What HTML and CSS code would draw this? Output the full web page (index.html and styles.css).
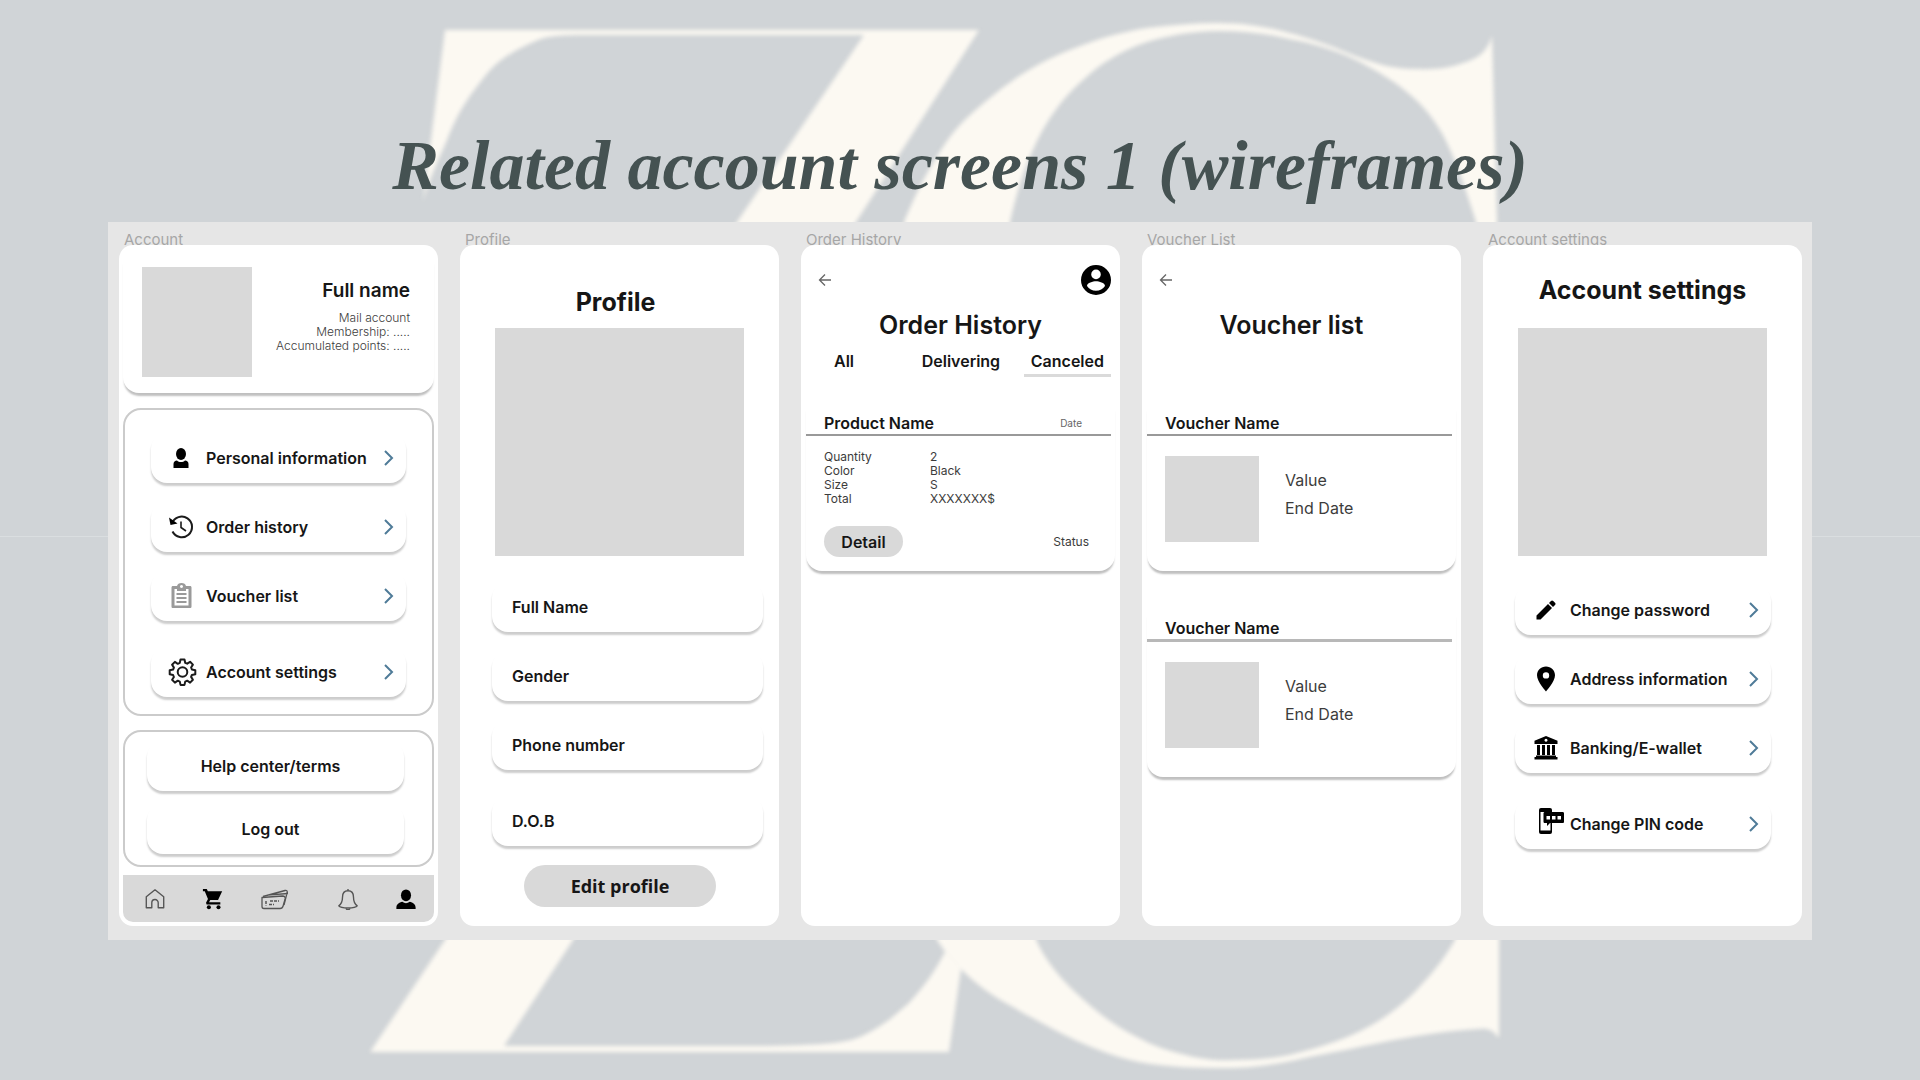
FILE: index.html
```html
<!DOCTYPE html>
<html lang="en">
<head>
<meta charset="utf-8">
<meta name="viewport" content="width=device-width, initial-scale=1">
<title>Related account screens 1 (wireframes)</title>
<link rel="stylesheet" href="styles.css">
</head>
<body>
<svg class="monogram" viewBox="0 0 1920 1080" preserveAspectRatio="xMidYMid slice" aria-hidden="true">
  <path d="M445 30H979L856 222L573 940L504 1046H767C830 1045 850 1042 862 1036C885 1025 895 1015 909 1003C930 980 938 965 945 952L937 940L961 969L949 1052H370L445 940L737 222L864 35H590C560 35 548 36 538 40C510 52 495 62 482 80C462 105 455 120 447 140C436 165 427 185 423 202Z"/>
  <path fill-rule="evenodd" d="M904 222C915 195 925 175 941 150C957 124 975 110 996 93C1022 72 1048 58 1075 48C1100 38 1122 32 1147 28C1170 25 1195 23 1218 23C1245 23 1268 27 1289 33C1306 37 1320 42 1336 48C1350 54 1362 59 1376 63C1388 67 1402 69 1419 69C1437 70 1452 67 1463 63C1476 59 1483 54 1487 47C1490 43 1491 39 1492 35L1497 222L1499 940V1038C1493 1030 1488 1028 1479 1029C1440 1031 1410 1037 1384 1042C1355 1048 1330 1053 1305 1058C1280 1064 1250 1068 1226 1068C1195 1068 1165 1067 1139 1062C1115 1057 1095 1049 1075 1040C1048 1027 1025 1014 1004 1002C985 991 972 980 961 969L937 940L904 700ZM1010 222L1036 940C1046 961 1059 977 1075 992C1094 1010 1114 1026 1139 1038C1153 1046 1169 1051 1186 1055C1200 1059 1217 1061 1234 1060C1258 1060 1278 1058 1297 1053C1325 1046 1348 1038 1368 1027C1392 1014 1409 999 1423 983C1437 968 1447 954 1455 940L1476 222C1466 190 1458 166 1447 143C1437 122 1424 106 1408 93C1394 81 1377 71 1360 62C1338 51 1314 43 1289 39C1266 33 1242 31 1218 31C1191 31 1167 36 1147 42C1120 51 1100 64 1083 80C1062 98 1047 120 1036 143C1024 168 1016 195 1010 222Z"/>
</svg>

<svg class="sprite" aria-hidden="true">
  <symbol id="i-chevron" viewBox="0 0 10 16"><path d="M1 1l7 7-7 7" fill="none" stroke="#4f7b98" stroke-width="2"/></symbol>
  <symbol id="i-back" viewBox="0 0 14 14"><path d="M13 7H1.500M7 1.500L1.500 7L7 12.500" fill="none" stroke="#666" stroke-width="1.300"/></symbol>
</svg>

<main class="slide">
  <h1 class="slide-title">Related account screens 1 (wireframes)</h1>
  <div class="board">

    <section class="screen">
      <h2 class="screen-label">Account</h2>
      <div class="frame">
        <div class="card user-card">
          <div class="avatar"></div>
          <div class="user-text">
            <h3 class="user-name">Full name</h3>
            <p class="small light">Mail account<br>Membership: .....<br>Accumulated points: .....</p>
          </div>
        </div>
        <div class="group">
          <div class="list">
            <button class="row" type="button">
              <svg class="icon" viewBox="0 0 28 28"><ellipse cx="13" cy="10" rx="5" ry="6"/><path d="M5.500 24v-4c0-2 1.500-3.500 3.500-3.500 2 2 6 2 8 0 2 0 3.500 1.500 3.500 3.500v4z"/></svg>
              <span>Personal information</span><svg class="chevron"><use href="#i-chevron"/></svg>
            </button>
            <button class="row" type="button">
              <svg class="icon" viewBox="0 0 28 28"><g fill="none" stroke="#1b1b1b" stroke-width="2"><path d="M4 10.500A10.300 10.300 0 1 1 4.500 18.500"/><path d="M13 8.500v6l5 3.500" stroke-width="1.600"/></g><path d="M1 4.500l1.500 7.500 7-1.500z"/></svg>
              <span>Order history</span><svg class="chevron"><use href="#i-chevron"/></svg>
            </button>
            <button class="row" type="button">
              <svg class="icon" viewBox="0 0 28 28"><path fill="#9a9a9a" fill-rule="evenodd" d="M5 4h4c.5-2 2-3 4.500-3S17.500 2 18 4h4c1 0 1.500.6 1.500 1.500v19c0 1-.6 1.500-1.500 1.500H5c-1 0-1.500-.5-1.500-1.500v-19C3.500 4.600 4 4 5 4zM6.500 7v16.500h14V7H18v2H9V7zM13.500 3a1.500 1.500 0 1 0 .01 0z"/><path d="M8.500 12h10M8.500 16h10M8.500 20h10" stroke="#9a9a9a" stroke-width="1.800"/></svg>
              <span>Voucher list</span><svg class="chevron"><use href="#i-chevron"/></svg>
            </button>
            <button class="row" type="button">
              <svg class="icon" viewBox="0 0 28 28"><g fill="none" stroke="#1b1b1b" stroke-width="2" stroke-linejoin="round"><circle cx="14.500" cy="14" r="4.800"/><path d="M12.500 1.500h4l.7 3.300 2 .9 2.900-1.900 2.800 2.800-1.800 2.900.8 2 3.400.7v4l-3.400.7-.8 2 1.800 2.900-2.800 2.800-2.900-1.900-2 .9-.7 3.300h-4l-.7-3.300-2-.9-2.900 1.900-2.800-2.800L5.900 19l-.8-2-3.400-.7v-4l3.400-.7.8-2-1.800-2.900 2.800-2.800 2.900 1.900 2-.9z"/></g></svg>
              <span>Account settings</span><svg class="chevron"><use href="#i-chevron"/></svg>
            </button>
          </div>
        </div>
        <div class="group group-links">
          <button class="row row-center" type="button">Help center/terms</button>
          <button class="row row-center" type="button">Log out</button>
        </div>
        <nav class="tabbar" aria-label="Main">
          <a href="#home" aria-label="Home"><svg viewBox="0 0 24 24"><path d="M2.500 9.500L12 2l9.500 7.500V21.500H15.500V16a3.500 3.500 0 0 0-7 0v5.500h-6z" fill="none" stroke="#555" stroke-width="1.500" stroke-linejoin="round"/></svg></a>
          <a href="#cart" aria-label="Cart"><svg viewBox="0 0 24 24"><path d="M1 1h4.200l1.200 2.500H22l-4.500 9.500H9l-1.300 2.500H20V18H5l-.6-1.800L6.500 12 3 3.500H1z"/><circle cx="7.500" cy="21" r="2.200"/><circle cx="18" cy="21" r="2.200"/></svg></a>
          <a href="#wallet" aria-label="Vouchers"><svg class="wide" viewBox="0 0 30 24"><g fill="none" stroke="#555" stroke-width="1.300" stroke-linejoin="round"><path d="M2 10.500L22.500 9c2 0 3 1 2.600 3l-2 7c-.4 1.500-1.200 2.500-3 2.500H4c-1.500 0-2-.8-2-2z"/><path d="M3 9.500L25 3.500c1.600-.4 2.500.2 2.200 1.800L24 18M7 8.200L28 6.500"/><path d="M6 14v4.500M9 17.500h5M10 14h9" stroke-width="1.500" stroke-dasharray="3 1"/></g></svg></a>
          <a href="#alerts" aria-label="Notifications"><svg viewBox="0 0 24 24"><path d="M12 1v2M12 3c-4 0-6 3-6 7 0 4-1 7-4 9.500 2 3 18 3 20 0-3-2.500-4-5.500-4-9.500 0-4-2-7-6-7zM10 22.500c.5 1.500 3.500 1.500 4 0" fill="none" stroke="#555" stroke-width="1.500" stroke-linejoin="round"/></svg></a>
          <a href="#account" aria-label="Account"><svg viewBox="0 0 24 24"><ellipse cx="12" cy="8" rx="5.500" ry="6.500"/><path d="M1.500 23v-1.500c0-4 3-5.500 6.500-6.500 2.500 2 5.500 2 8 0 3.500 1 6.500 2.500 6.500 6.500V23z"/></svg></a>
        </nav>
      </div>
    </section>

    <section class="screen">
      <h2 class="screen-label">Profile</h2>
      <div class="frame">
        <h3 class="heading heading-photo heading-low">Profile</h3>
        <div class="photo"></div>
        <form class="profile-form">
          <div class="list">
            <input class="field" type="text" aria-label="Full Name" placeholder="Full Name">
            <input class="field" type="text" aria-label="Gender" placeholder="Gender">
            <input class="field" type="text" aria-label="Phone number" placeholder="Phone number">
            <input class="field" type="text" aria-label="D.O.B" placeholder="D.O.B">
          </div>
          <button class="pill pill-edit" type="button">Edit profile</button>
        </form>
      </div>
    </section>

    <section class="screen">
      <h2 class="screen-label">Order History</h2>
      <div class="frame">
        <div class="topbar">
          <a href="#back" aria-label="Back"><svg class="back"><use href="#i-back"/></svg></a>
          <a href="#me" aria-label="Account"><svg class="me" viewBox="0 0 30 30"><path fill-rule="evenodd" d="M15 0a15 15 0 1 0 0 30 15 15 0 0 0 0-30zm0 4.600a4.800 4.800 0 1 1 0 9.600 4.800 4.800 0 0 1 0-9.600zm0 21.100c-3.800 0-7-1.900-9-4.800.1-3 6-4.600 9-4.600s8.900 1.600 9 4.600c-2 2.900-5.200 4.800-9 4.800z"/></svg></a>
        </div>
        <h3 class="heading">Order History</h3>
        <div class="tabs">
          <button class="tab" type="button">All</button>
          <button class="tab" type="button">Delivering</button>
          <button class="tab tab-active" type="button">Canceled</button>
        </div>
        <article class="card item">
          <header class="item-head"><h4>Product Name</h4><span class="date">Date</span></header>
          <dl class="details small">
            <dt>Quantity</dt><dd>2</dd>
            <dt>Color</dt><dd>Black</dd>
            <dt>Size</dt><dd>S</dd>
            <dt>Total</dt><dd>XXXXXXX$</dd>
          </dl>
          <footer class="item-foot"><button class="pill pill-detail" type="button">Detail</button><span class="small">Status</span></footer>
        </article>
      </div>
    </section>

    <section class="screen">
      <h2 class="screen-label">Voucher List</h2>
      <div class="frame">
        <div class="topbar"><a href="#back" aria-label="Back"><svg class="back"><use href="#i-back"/></svg></a></div>
        <h3 class="heading heading-voucher">Voucher list</h3>
        <article class="card item">
          <header class="item-head"><h4>Voucher Name</h4></header>
          <div class="voucher"><div class="thumb"></div><p>Value<br>End Date</p></div>
        </article>
        <article class="card item">
          <header class="item-head item-head-thick"><h4>Voucher Name</h4></header>
          <div class="voucher"><div class="thumb"></div><p>Value<br>End Date</p></div>
        </article>
      </div>
    </section>

    <section class="screen">
      <h2 class="screen-label">Account settings</h2>
      <div class="frame">
        <h3 class="heading heading-photo">Account settings</h3>
        <div class="photo"></div>
        <div class="list list-settings">
          <button class="row" type="button">
            <svg class="icon" viewBox="0 0 28 28"><path d="M4.500 19.500L16 8l4 4L8.500 23.500h-4zM17 7l2-2c.7-.7 1.500-.7 2.200 0l1.800 1.800c.7.7.7 1.500 0 2.200l-2 2z"/></svg>
            <span>Change password</span><svg class="chevron"><use href="#i-chevron"/></svg>
          </button>
          <button class="row" type="button">
            <svg class="icon" viewBox="0 0 28 28"><path fill-rule="evenodd" d="M14 1.500c-5 0-9 3.800-9 8.800C5 17 14 26.500 14 26.500s9-9.500 9-16.200c0-5-4-8.800-9-8.800zm0 5.700a3.200 3.200 0 1 1 0 6.400 3.200 3.200 0 0 1 0-6.400z"/></svg>
            <span>Address information</span><svg class="chevron"><use href="#i-chevron"/></svg>
          </button>
          <button class="row" type="button">
            <svg class="icon" viewBox="0 0 28 28"><path fill-rule="evenodd" d="M14 2l11.500 4.800V10h-23V6.800zm0 2.800a1.500 1.500 0 1 0 .01 0zM5 11h3v10H5zm5 0h3v10h-3zm5 0h3v10h-3zm5 0h3v10h-3zM4 21.500h20V23h1.500v2.500h-23V23H4z"/></svg>
            <span>Banking/E-wallet</span><svg class="chevron"><use href="#i-chevron"/></svg>
          </button>
          <button class="row" type="button">
            <svg class="icon" viewBox="0 0 28 28"><rect x="7" y="-2" width="13" height="26" rx="2"/><path fill="#fff" d="M8.500 2h10v18.500h-10z"/><path d="M13 2h17.500c1 0 1.500.5 1.500 1.500v8c0 1-.5 1.500-1.500 1.500H18l-3 3v-3h-2c-1 0-1.500-.5-1.500-1.500v-8C11.500 2.500 12 2 13 2z"/><path fill="#fff" d="M14.500 6h3.500v3.500h-3.500zm5.500 0h3.500v3.500H20zm5.500 0H29v3.500h-3.500z"/></svg>
            <span>Change PIN code</span><svg class="chevron"><use href="#i-chevron"/></svg>
          </button>
        </div>
      </div>
    </section>

  </div>
</main>
</body>
</html>
```
FILE: styles.css
```css
* { box-sizing: border-box; }

body {
  margin: 0;
  min-height: 100vh;
  position: relative;
  overflow-x: hidden;
  background: linear-gradient(#dadee0, #dadee0) 0 536px / 100% 1px no-repeat #d0d4d7;
  color: #161616;
  font-family: Inter, "Liberation Sans", sans-serif;
  font-size: 16px;
}

h1, h2, h3, h4, p, dl, dd { margin: 0; }

button, input { font: inherit; color: inherit; border: 0; padding: 0; margin: 0; }

a { color: inherit; }

svg { display: block; flex: none; }

.sprite { position: absolute; width: 0; height: 0; }

.monogram {
  position: absolute;
  inset: 0;
  width: 100%;
  height: 100%;
  fill: #fcf9f2;
  filter: blur(2px);
}

.slide { position: relative; padding: 126px 108px 140px; }

.slide-title {
  margin-bottom: 16px;
  font: italic bold 70px/80px "Liberation Serif", "Times New Roman", serif;
  color: #455252;
  text-align: center;
}

.board {
  display: grid;
  grid-template-columns: repeat(5, minmax(0, 1fr));
  gap: 22px;
  padding: 7px 10px 14px 11px;
  background: #e6e6e6;
}

.screen { display: flex; flex-direction: column; }

.screen-label {
  height: 16px;
  padding-left: 5px;
  font-size: 15px;
  line-height: 22px;
  font-weight: 400;
  color: #a6a6a6;
}

.frame {
  flex: 1;
  display: flex;
  flex-direction: column;
  padding: 4px;
  border-radius: 14px;
  background: #fff;
}

/* Shared pieces */
.card { border-radius: 16px; box-shadow: 0 4px 2px -1px rgba(0, 0, 0, .25); }

.small { font-size: 12px; line-height: 14px; font-weight: 400; color: #3c3c3c; }
.light { font-weight: 300; }

.list { display: flex; flex-direction: column; gap: 19px; }
.list > :last-child { margin-top: 7px; }

.row, .field {
  height: 50px;
  border-radius: 16px;
  background: #fff;
  box-shadow: 0 3px 2px rgba(0, 0, 0, .2);
  font-weight: 600;
}

.row {
  display: flex;
  align-items: center;
  gap: 10px;
  padding: 0 12px 0 17px;
  text-align: left;
}
.row span { flex: 1; white-space: nowrap; }
.row-center { justify-content: center; padding: 0 10px 0 0; }

.icon { width: 28px; height: 28px; overflow: visible; }
.chevron { width: 10px; height: 16px; }

.heading {
  font-size: 25px;
  line-height: 32px;
  font-weight: 600;
  text-align: center;
}

.pill { border-radius: 24px; background: #d9d9d9; font-weight: 600; }

/* Account */
.user-card {
  display: flex;
  justify-content: space-between;
  height: 144px;
  padding: 18px 24px 0 19px;
}
.avatar { width: 110px; height: 110px; background: #d9d9d9; }
.user-text { padding-top: 12px; text-align: right; }
.user-name { margin-bottom: 8px; font-size: 19px; line-height: 24px; font-weight: 600; }

.group {
  margin-top: 15px;
  padding: 23px 26px 17px;
  border: 2px solid #cbcbcb;
  border-radius: 18px;
}
.group-links {
  display: flex;
  flex-direction: column;
  gap: 13px;
  margin-top: 14px;
  padding: 9px 28px 11px 22px;
}

.tabbar {
  display: flex;
  justify-content: space-between;
  align-items: center;
  height: 47px;
  margin-top: 8px;
  padding: 0 17px 0 21px;
  background: #d9d9d9;
  border-radius: 0 0 10px 10px;
}
.tabbar svg { width: 22px; height: 22px; }
.tabbar .wide { width: 30px; height: 24px; margin-right: 12px; }

/* Profile and settings */
.heading-photo { padding: 25px 0 22px; font-weight: 700; }
.heading-low { padding: 37px 8px 10px 0; }
.photo { height: 228px; margin: 0 31px; background: #d9d9d9; }
.profile-form { display: flex; flex-direction: column; margin-top: 26px; padding: 0 12px 0 28px; }
.field { width: 100%; padding: 0 20px; }
.field::placeholder { color: #161616; opacity: 1; }
.pill-edit {
  align-self: center;
  width: 192px;
  height: 42px;
  margin: 19px 15px 0 0;
  font: 700 18px/24px "Open Sans", sans-serif;
}
.list-settings { margin-top: 29px; padding: 0 27px 0 28px; }

/* Order history and vouchers */
.topbar {
  display: flex;
  justify-content: space-between;
  align-items: center;
  height: 30px;
  margin: 16px 5px 14px 13px;
}
.back { width: 14px; height: 14px; }
.me { width: 30px; height: 30px; }
.heading-voucher { padding-right: 20px; }

.tabs { display: flex; justify-content: space-between; margin: 5px 5px 0 29px; }
.tab {
  padding: 5px 0 3px;
  border-bottom: 3px solid transparent;
  line-height: 20px;
  background: none;
  font-weight: 600;
}
.tab:nth-child(2) { margin-left: 44px; }
.tab-active { padding: 5px 7px 3px; border-bottom-color: #dadada; }

/* The shadow shows only under the lower edge of an item */
.item { height: 175px; margin: 19px 1px 0; clip-path: inset(0 -2px -8px -2px); }
.heading-voucher + .item { margin-top: 55px; }
.item + .item { margin-top: 31px; }
.item-head {
  display: flex;
  justify-content: space-between;
  align-items: center;
  height: 40px;
  margin-right: 4px;
  padding: 15px 29px 0 18px;
  border-bottom: 2px solid #999;
}
.item-head-thick { border-bottom: 3px solid #b8b8b8; }
.item-head h4 { font-size: 16px; line-height: 20px; font-weight: 600; }
.date { font-size: 10px; color: #666; }

.details { display: grid; grid-template-columns: 106px 1fr; padding: 14px 18px 0; }

.item-foot {
  display: flex;
  justify-content: space-between;
  align-items: center;
  margin-top: 20px;
  padding: 0 26px 0 18px;
}
.pill-detail { width: 79px; height: 31px; }

.voucher { display: flex; gap: 26px; padding: 20px 18px 0; }
.thumb { width: 94px; height: 86px; background: #d9d9d9; }
.voucher p { padding-top: 10px; line-height: 28px; color: #3c3c3c; }
```
